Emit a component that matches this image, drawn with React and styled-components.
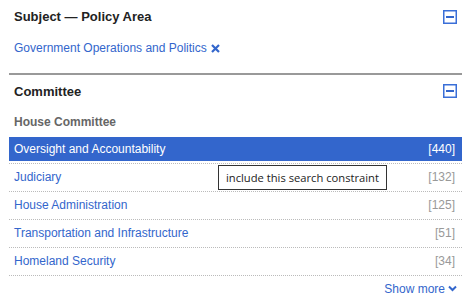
import React from "react";
import styled, { createGlobalStyle } from "styled-components";

const Global = createGlobalStyle`
  html, body { margin: 0; padding: 0; background: #fff; }
  body { font-family: "Liberation Sans", Arial, sans-serif; font-size: 12px; color: #222; }
  * { box-sizing: border-box; }
`;

const Panel = styled.div`
  width: 476px;
  padding: 0 14px 0 9px;
`;

const Section = styled.section`
  border-bottom: ${(p) => (p.$divider ? "2px solid #999" : "none")};
  padding-bottom: ${(p) => (p.$divider ? "10px" : "0")};
`;

const Header = styled.div`
  display: flex;
  align-items: center;
  justify-content: space-between;
  height: ${(p) => p.$h || 33}px;
  padding: 0 5px;
`;

const Title = styled.h3`
  margin: 0;
  font-size: 13px;
  font-weight: bold;
  color: #222;
`;

const Toggle = styled.button`
  width: 14px;
  height: 14px;
  padding: 0;
  border: none;
  background: none;
  display: flex;
  cursor: pointer;
`;

const Selected = styled.div`
  display: flex;
  align-items: center;
  gap: 4px;
  height: 30px;
  padding: 0 5px;
  color: #3366cc;
`;

const SubHead = styled.div`
  height: 29px;
  display: flex;
  align-items: center;
  padding: 0 5px;
  font-weight: bold;
  color: #666;
`;

const List = styled.ul`
  list-style: none;
  margin: 0;
  padding: 0;
`;

const Item = styled.li`
  position: relative;
  padding: 1px 0 2px;
  border-bottom: 1px dotted #bbb;
`;

const ItemLink = styled.a`
  display: flex;
  align-items: center;
  justify-content: space-between;
  height: 24px;
  padding: 0 7px 0 5px;
  text-decoration: none;
  color: ${(p) => (p.$active ? "#fff" : "#3366cc")};
  background: ${(p) => (p.$active ? "#3366cc" : "transparent")};
`;

const Count = styled.span`
  color: ${(p) => (p.$active ? "#fff" : "#999")};
`;

const Tooltip = styled.div`
  position: absolute;
  left: 209px;
  top: 1px;
  height: 25px;
  padding: 0 7px;
  display: flex;
  align-items: center;
  background: #fff;
  border: 1px solid #333;
  font-family: "Open Sans", sans-serif;
  font-size: 11.2px;
  color: #222;
  white-space: nowrap;
`;

const Footer = styled.div`
  display: flex;
  justify-content: flex-end;
  height: 24px;
  align-items: center;
  padding: 1px 5px 0;
`;

const More = styled.a`
  display: flex;
  align-items: center;
  gap: 3px;
  font-size: 12px;
  color: #3366cc;
  text-decoration: none;
`;

const MinusIcon = () => (
  <svg width="14" height="14" viewBox="0 0 14 14">
    <rect x="0.75" y="0.75" width="12.5" height="12.5" fill="#fff" stroke="#3a6fd8" strokeWidth="1.5" />
    <rect x="3" y="6" width="8" height="2" fill="#3366cc" />
  </svg>
);

const XIcon = () => (
  <svg width="9" height="9" viewBox="0 0 9 9">
    <path d="M1 1L8 8M8 1L1 8" stroke="#3366cc" strokeWidth="2.2" />
  </svg>
);

const Chevron = () => (
  <svg width="9" height="7" viewBox="0 0 9 7">
    <path d="M1 1.5L4.5 5L8 1.5" fill="none" stroke="#3366cc" strokeWidth="2" />
  </svg>
);

const items = [
  { name: "Oversight and Accountability", count: 440, active: true },
  { name: "Judiciary", count: 132, tip: true },
  { name: "House Administration", count: 125 },
  { name: "Transportation and Infrastructure", count: 51 },
  { name: "Homeland Security", count: 34 },
];

export default function App() {
  return (
    <>
      <Global />
      <Panel>
        <Section $divider>
          <Header>
            <Title>Subject — Policy Area</Title>
            <Toggle aria-label="collapse"><MinusIcon /></Toggle>
          </Header>
          <Selected>
            Government Operations and Politics <XIcon />
          </Selected>
        </Section>
        <Section>
          <Header $h={32}>
            <Title>Committee</Title>
            <Toggle aria-label="collapse"><MinusIcon /></Toggle>
          </Header>
          <SubHead>House Committee</SubHead>
          <List>
            {items.map((it) => (
              <Item key={it.name}>
                <ItemLink href="#" $active={it.active}>
                  <span>{it.name}</span>
                  <Count $active={it.active}>[{it.count}]</Count>
                </ItemLink>
                {it.tip && <Tooltip>include this search constraint</Tooltip>}
              </Item>
            ))}
          </List>
          <Footer>
            <More href="#">Show more <Chevron /></More>
          </Footer>
        </Section>
      </Panel>
    </>
  );
}
